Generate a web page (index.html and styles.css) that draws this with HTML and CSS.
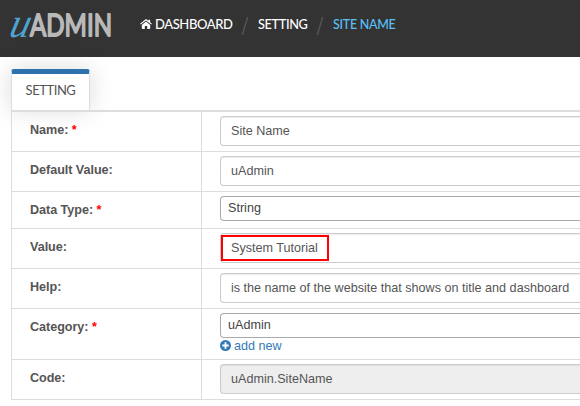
FILE: index.html
```html
<!DOCTYPE html>
<html lang="en">
<head>
<meta charset="utf-8">
<title>Site Name</title>
<link rel="stylesheet" href="styles.css">
</head>
<body>
<header class="topbar">
  <svg class="logo" width="106" height="34" viewBox="0 0 106 34" role="img" aria-label="uAdmin">
    <text class="logo-u" transform="translate(0 28.5) skewX(-14)" textLength="20" lengthAdjust="spacingAndGlyphs">u</text>
    <text class="logo-name" x="22" y="27.8" textLength="82" lengthAdjust="spacingAndGlyphs">ADMIN</text>
  </svg>
  <nav class="crumbs">
    <a class="crumb home"><svg class="house" width="12" height="10" viewBox="0 0 12 10"><path d="M6 2.4 10.2 6v3.2q0 .8-.8.8H7.2V7H4.8v3H2.6q-.8 0-.8-.8V6z"/><path d="M5.3.4q.7-.6 1.4 0l1.7 1.4V.7h1.7v2.5l1.8 1.5-.7.8L6 1.5.8 5.5.1 4.7z"/></svg><span class="t-dashboard">DASHBOARD</span></a>
    <svg class="slash" width="8" height="20" viewBox="0 0 8 20"><path d="M6.7 1 1.3 19"/></svg>
    <a class="crumb t-setting">SETTING</a>
    <svg class="slash" width="8" height="20" viewBox="0 0 8 20"><path d="M6.7 1 1.3 19"/></svg>
    <a class="crumb current">SITE NAME</a>
  </nav>
</header>
<main class="content">
  <div class="tab">SETTING</div>
  <div class="form">
    <div class="row"><div class="label">Name: <i>*</i></div><div class="cell"><div class="input">Site Name</div></div></div>
    <div class="row"><div class="label">Default Value:</div><div class="cell"><div class="input">uAdmin</div></div></div>
    <div class="row short"><div class="label">Data Type: <i>*</i></div><div class="cell"><div class="select">String</div></div></div>
    <div class="row"><div class="label">Value:</div><div class="cell"><div class="input">System Tutorial</div><div class="highlight"></div></div></div>
    <div class="row"><div class="label">Help:</div><div class="cell"><div class="input">is the name of the website that shows on title and dashboard</div></div></div>
    <div class="row tall"><div class="label">Category: <i>*</i></div><div class="cell"><div class="select">uAdmin</div><a class="add"><svg width="11" height="11" viewBox="0 0 11 11"><circle cx="5.5" cy="5.5" r="5.5"/><path d="M5.5 2.3v6.4M2.3 5.5h6.4"/></svg>add new</a></div></div>
    <div class="row"><div class="label">Code:</div><div class="cell"><div class="input disabled">uAdmin.SiteName</div></div></div>
  </div>
</main>
</body>
</html>
```
FILE: styles.css
```css
* { box-sizing: border-box; }
body {
  margin: 0;
  height: 406px;
  overflow: hidden;
  background: #fff;
  color: #555;
  font: 12.6px/18px "Liberation Sans", Arial, sans-serif;
}
.topbar {
  display: flex;
  align-items: flex-start;
  height: 57px;
  padding: 8px 0 0 8px;
  background: #333;
}
.logo { flex: none; overflow: visible; }
.logo-u { font: italic 42px "Liberation Serif", serif; fill: #4fa3d1; }
.logo-name { font: 31px Lato, sans-serif; fill: #b9b9b9; stroke: #b9b9b9; stroke-width: 1.8px; stroke-linejoin: round; }
.crumbs {
  display: flex;
  align-items: center;
  height: 20px;
  margin: 6px 0 0 26px;
  color: #fff;
  font: 500 14px/20px Lato, sans-serif;
  white-space: nowrap;
}
.crumb { flex: none; }
.home { display: flex; align-items: center; width: 93px; }
.house { flex: none; margin-right: 3px; fill: #fff; }
.slash { flex: none; margin: 3px 9px 0 8px; fill: none; stroke: #555; stroke-width: 1.4; }
.t-dashboard, .t-setting, .current { transform-origin: left; }
.t-dashboard { letter-spacing: -.45px; transform: scaleX(.93); }
.t-setting { width: 50px; letter-spacing: -.4px; transform: scaleX(.91); }
.current { width: 70px; color: #5bc0f8; letter-spacing: -.3px; transform: scaleX(.89); }
.content { padding: 12px 0 0 11px; }
.tab {
  width: 79px;
  height: 41px;
  padding-top: 7px;
  border: 1px solid #ddd;
  border-top: 5px solid #2e72ad;
  border-bottom: 0;
  border-radius: 3px 3px 0 0;
  box-shadow: 0 0 25px rgba(0, 0, 0, .15);
  color: #555;
  font: 13px/18px Lato, sans-serif;
  letter-spacing: -.45px;
  text-align: center;
}
.form {
  border-top: 2px solid #ddd;
  border-left: 1px solid #ddd;
}
.row {
  display: grid;
  grid-template-columns: 190px 1fr;
  height: 40px;
  border-bottom: 1px solid #ddd;
}
.short { height: 37px; }
.tall { height: 51px; }
.label {
  padding: 9px 0 0 18px;
  border-right: 1px solid #ddd;
  font-weight: bold;
  letter-spacing: -.04px;
}
.label i { color: #f00; font-style: normal; }
.cell { position: relative; padding: 4px 0 0 18px; white-space: nowrap; }
.input {
  height: 30px;
  padding: 5px 0 5px 10px;
  border: 1px solid #ccc;
  border-right: 0;
  border-radius: 4px 0 0 4px;
  box-shadow: inset 0 1px 1px rgba(0, 0, 0, .075);
}
.disabled { background: #eee; }
.select {
  height: 25px;
  padding: 2px 0 2px 7px;
  border: 1px solid #aaa;
  border-right: 0;
  border-radius: 4px 0 0 4px;
  color: #444;
}
.add { display: flex; align-items: center; gap: 3px; height: 15px; color: #337ab7; }
.add circle { fill: #337ab7; }
.add path { fill: none; stroke: #fff; stroke-width: 1.8; }
.highlight {
  position: absolute;
  left: 19px;
  top: 6px;
  width: 108px;
  height: 26px;
  border: 2px solid #f00;
}
```
